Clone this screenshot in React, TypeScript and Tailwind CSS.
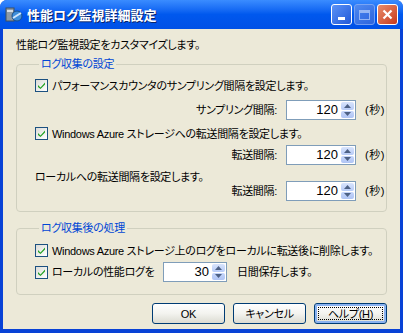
const jp = "font-['Liberation_Sans','Noto_Sans_CJK_JP',sans-serif] [font-feature-settings:'palt']";

const Check = () => (
  <span className="flex h-[13px] w-[13px] shrink-0 items-center justify-center border border-[#1C5180] bg-gradient-to-br from-[#DCDCD7] to-white">
    <svg width="9" height="9" viewBox="0 0 9 9">
      <path d="M1 4 L3.5 6.5 L8 1.5 L8 3.5 L3.5 8 L1 6 Z" fill="#21A121" />
    </svg>
  </span>
);

const Spin = ({ value, w }: { value: string; w: string }) => (
  <div className={`flex h-[20px] ${w} items-stretch border border-[#7F9DB9] bg-white`}>
    <div className="flex flex-1 items-center justify-end pr-[2px] text-[13px] tracking-normal">{value}</div>
    <div className="flex w-[15px] flex-col gap-px p-px">
      <div className="flex flex-1 items-center justify-center rounded-[2px] bg-gradient-to-b from-[#D8E4FC] to-[#B7CBF7]">
        <svg width="7" height="4" viewBox="0 0 7 4"><path d="M0 4 L3.5 0 L7 4 Z" fill="#4D6185" /></svg>
      </div>
      <div className="flex flex-1 items-center justify-center rounded-[2px] bg-gradient-to-b from-[#C6D6FA] to-[#AFC4F4]">
        <svg width="7" height="4" viewBox="0 0 7 4"><path d="M0 0 L7 0 L3.5 4 Z" fill="#4D6185" /></svg>
      </div>
    </div>
  </div>
);

const IntervalRow = ({ label, cls }: { label: string; cls: string }) => (
  <div className={`flex h-[20px] items-center justify-end ${cls}`}>
    <span>{label}</span>
    <div className="ml-[9px]"><Spin value="120" w="w-[70px]" /></div>
    <span className="ml-[9px] w-[21px] tracking-[0.5px]">(秒)</span>
  </div>
);

const Button = ({ children, focus }: { children: React.ReactNode; focus?: boolean }) => (
  <button
    className={`relative flex h-[21px] w-[73px] items-center justify-center rounded-[3px] border border-[#003C74] bg-gradient-to-b from-white via-[#F3F3EF] to-[#DCDBD2] ${focus ? "shadow-[inset_0_0_0_2px_#8AB2F0]" : ""}`}
  >
    {focus && <span className="absolute inset-[3px] border border-dotted border-black" />}
    <span className="relative">{children}</span>
  </button>
);

export default function App() {
  return (
    <div className={`flex h-[333px] w-[403px] flex-col overflow-hidden whitespace-nowrap rounded-t-[7px] bg-[#0842D6] text-[11px] leading-[14px] tracking-[-0.3px] text-black ${jp}`}>
      {/* Title bar */}
      <div className="flex h-[29px] shrink-0 items-center bg-gradient-to-b from-[#3A8CFF] via-[#0058EE] to-[#0050E6] pl-[5px] pr-[5px]">
        <svg width="18" height="16" viewBox="0 0 18 16" className="mr-[4px]">
          <rect x="1" y="1" width="8" height="13" fill="#8E9AA6" stroke="#40505E" />
          <rect x="2" y="3" width="6" height="2" fill="#D7DDE4" />
          <ellipse cx="12" cy="9" rx="5" ry="5" fill="#3F8EDA" stroke="#1A4F8A" />
          <path d="M8 11 L16 6" stroke="#CFE6FF" strokeWidth="2" />
        </svg>
        <span className="flex-1 text-[13px] font-bold tracking-normal text-white [text-shadow:1px_1px_0_#0A246A] font-['Noto_Sans_CJK_JP',sans-serif]">
          性能ログ監視詳細設定
        </span>
        <div className="flex gap-[2px]">
          <div className="flex h-[21px] w-[21px] items-end justify-center rounded-[3px] border border-white bg-gradient-to-br from-[#5C92F6] to-[#2158D8] pb-[4px]">
            <div className="h-[3px] w-[7px] bg-white" />
          </div>
          <div className="flex h-[21px] w-[21px] items-center justify-center rounded-[3px] border border-[#8FB0F3] bg-gradient-to-br from-[#5C8FEF] to-[#3A6BDB] opacity-80">
            <div className="h-[10px] w-[11px] border border-[#B9CCF5] border-t-[3px]" />
          </div>
          <div className="flex h-[21px] w-[21px] items-center justify-center rounded-[3px] border border-white bg-gradient-to-br from-[#E88C6B] to-[#C6361A]">
            <svg width="11" height="11" viewBox="0 0 11 11">
              <path d="M1.5 1.5 L9.5 9.5 M9.5 1.5 L1.5 9.5" stroke="white" strokeWidth="2.2" />
            </svg>
          </div>
        </div>
      </div>

      {/* Body */}
      <div className="mx-[3px] mb-[4px] flex flex-1 flex-col bg-[#ECE9D8] px-[13px]">
        <div className="mt-[9px]">性能ログ監視設定をカスタマイズします。</div>

        <fieldset className="mt-[5px] h-[155px] rounded-[4px] border border-[#D0D0BF] pl-[18px]">
          <legend className="ml-[4px] px-[2px] text-[#0046D5]">ログ収集の設定</legend>
          <div className="mt-[8px] flex h-[13px] items-center gap-[4px]">
            <Check />
            <span>パフォーマンスカウンタのサンプリング間隔を設定します。</span>
          </div>
          <IntervalRow label="サンプリング間隔:" cls="mt-[8px]" />
          <div className="mt-[7px] flex h-[13px] items-center gap-[4px]">
            <Check />
            <span>Windows Azure ストレージへの転送間隔を設定します。</span>
          </div>
          <IntervalRow label="転送間隔:" cls="mt-[5px]" />
          <div className="mt-[5px] flex h-[14px] items-center">ローカルへの転送間隔を設定します。</div>
          <IntervalRow label="転送間隔:" cls="-mt-[3px]" />
        </fieldset>

        <fieldset className="mt-[9px] h-[74px] rounded-[4px] border border-[#D0D0BF] pl-[18px]">
          <legend className="ml-[4px] px-[2px] text-[#0046D5]">ログ収集後の処理</legend>
          <div className="mt-[9px] flex h-[13px] items-center gap-[4px]">
            <Check />
            <span>Windows Azure ストレージ上のログをローカルに転送後に削除します。</span>
          </div>
          <div className="mt-[5px] flex h-[20px] items-center">
            <Check />
            <span className="ml-[4px] w-[111px]">ローカルの性能ログを</span>
            <Spin value="30" w="w-[64px]" />
            <span className="ml-[10px]">日間保存します。</span>
          </div>
        </fieldset>

        <div className="mt-[8px] flex justify-end gap-[8px]">
          <Button>OK</Button>
          <Button>キャンセル</Button>
          <Button focus>ヘルプ(<span className="underline">H</span>)</Button>
        </div>
      </div>
    </div>
  );
}
